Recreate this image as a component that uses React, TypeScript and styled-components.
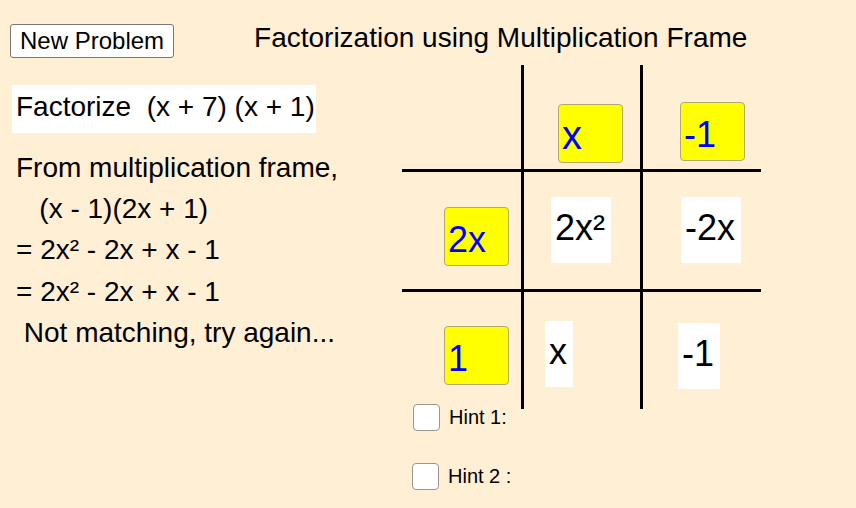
import React from "react";
import styled, { createGlobalStyle } from "styled-components";

const GlobalStyle = createGlobalStyle`
  body {
    margin: 0;
    background: #ffefd5;
    font-family: "Liberation Sans", Arial, sans-serif;
  }
`;

type FrameCell = {
  kind: "empty" | "factor" | "product";
  text?: string;
  size?: number;
  left?: boolean;
  top?: boolean;
  pl: number;
  pt: number;
};

const cells: FrameCell[] = [
  { kind: "empty", pl: 0, pt: 0 },
  { kind: "factor", text: "x", size: 40, left: true, pl: 34, pt: 39 },
  { kind: "factor", text: "-1", left: true, pl: 37, pt: 37 },
  { kind: "factor", text: "2x", top: true, pl: 42, pt: 35 },
  { kind: "product", text: "2x²", top: true, left: true, pl: 27, pt: 25 },
  { kind: "product", text: "-2x", top: true, left: true, pl: 38, pt: 25 },
  { kind: "factor", text: "1", top: true, pl: 42, pt: 34 },
  { kind: "product", text: "x", top: true, left: true, pl: 21, pt: 29 },
  { kind: "product", text: "-1", top: true, left: true, pl: 35, pt: 31 },
];

const workLines = [
  "From multiplication frame,",
  "   (x - 1)(2x + 1)",
  "= 2x² - 2x + x - 1",
  "= 2x² - 2x + x - 1",
  " Not matching, try again...",
];

function App() {
  return (
    <Page>
      <GlobalStyle />
      <Header>
        <Button type="button">New Problem</Button>
        <Title>Factorization using Multiplication Frame</Title>
      </Header>
      <Body>
        <LeftCol>
          <Question>Factorize&nbsp; (x + 7) (x + 1)</Question>
          <Work>
            {workLines.map((line, i) => (
              <WorkLine key={i}>{line}</WorkLine>
            ))}
          </Work>
        </LeftCol>
        <FrameArea>
          <Frame>
            {cells.map((c, i) => (
              <Cell key={i} $left={c.left} $top={c.top} $pl={c.pl} $pt={c.pt}>
                {c.kind === "factor" && <FactorBox $size={c.size ?? 36}>{c.text}</FactorBox>}
                {c.kind === "product" && <Product>{c.text}</Product>}
              </Cell>
            ))}
          </Frame>
          <Hints>
            <HintRow $indent={11}>
              <Check />
              <HintLabel>Hint 1:</HintLabel>
            </HintRow>
            <HintRow $indent={10}>
              <Check />
              <HintLabel>Hint 2 :</HintLabel>
            </HintRow>
          </Hints>
        </FrameArea>
      </Body>
    </Page>
  );
}

export default App;

const Page = styled.div`
  width: 856px;
  height: 508px;
  overflow: hidden;
  background: #ffefd5;
  color: #000;
`;

const Header = styled.div`
  display: flex;
  align-items: flex-start;
  height: 58px;
`;

const Button = styled.button`
  box-sizing: border-box;
  margin: 24px 0 0 10px;
  height: 34px;
  padding: 0 9px;
  border: 1px solid #7a7670;
  border-radius: 3px;
  background: #fff;
  font-family: "Liberation Sans", Arial, sans-serif;
  font-size: 24px;
  line-height: 32px;
  color: #000;
  cursor: pointer;
`;

const Title = styled.div`
  margin: 22px 0 0 80px;
  font-size: 28px;
  white-space: nowrap;
`;

const Body = styled.div`
  display: flex;
  align-items: flex-start;
`;

const LeftCol = styled.div`
  box-sizing: border-box;
  flex: 0 0 402px;
  padding: 27px 0 0 12px;
  display: flex;
  flex-direction: column;
  align-items: flex-start;
`;

const Question = styled.div`
  background: #fff;
  font-size: 28px;
  line-height: normal;
  padding: 6px 1px 10px 4px;
  white-space: nowrap;
`;

const Work = styled.div`
  margin-top: 14px;
  padding-left: 4px;
`;

const WorkLine = styled.div`
  font-size: 28px;
  line-height: 41.2px;
  white-space: pre;
`;

const FrameArea = styled.div`
  margin-top: 7px;
  display: flex;
  flex-direction: column;
`;

const Frame = styled.div`
  display: grid;
  grid-template-columns: 119px 119px 121px;
  grid-template-rows: 104px 120px 120px;
`;

const Cell = styled.div<{ $left?: boolean; $top?: boolean; $pl: number; $pt: number }>`
  box-sizing: border-box;
  display: flex;
  align-items: flex-start;
  border-left: ${(p) => (p.$left ? "3px solid #000" : "none")};
  border-top: ${(p) => (p.$top ? "3px solid #000" : "none")};
  padding: ${(p) => p.$pt}px 0 0 ${(p) => p.$pl}px;
`;

const FactorBox = styled.div<{ $size: number }>`
  box-sizing: border-box;
  width: 65px;
  height: 59px;
  padding: ${(p) => Math.round(44 - p.$size * 0.905)}px 0 0 3px;
  background: #ffff00;
  border: 1px solid #b5a86c;
  border-radius: 4px;
  color: #0000ff;
  font-size: ${(p) => p.$size}px;
  line-height: normal;
  overflow: hidden;
`;

const Product = styled.div`
  box-sizing: border-box;
  height: 66px;
  padding: 10px 6px 0 4px;
  background: #fff;
  font-size: 36px;
  line-height: normal;
  white-space: nowrap;
`;

const Hints = styled.div`
  margin-top: -5px;
  display: flex;
  flex-direction: column;
  gap: 32px;
`;

const HintRow = styled.label<{ $indent: number }>`
  display: flex;
  align-items: center;
  gap: 9px;
  padding-left: ${(p) => p.$indent}px;
  cursor: pointer;
`;

const Check = styled.span`
  box-sizing: border-box;
  width: 27px;
  height: 27px;
  background: #fff;
  border: 1px solid #9c958e;
  border-radius: 4px;
`;

const HintLabel = styled.span`
  font-size: 20px;
`;
